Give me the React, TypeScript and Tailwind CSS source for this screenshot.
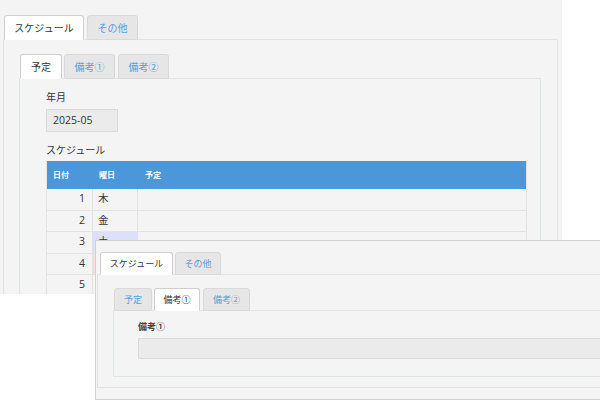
import React from "react";

const font = { fontFamily: '"Open Sans","Noto Sans CJK JP",sans-serif' };

const rows = [
  { d: 1, w: "木", bg: "" },
  { d: 2, w: "金", bg: "" },
  { d: 3, w: "土", bg: "bg-[#dde0fb]" },
  { d: 4, w: "日", bg: "bg-[#f8dcdc]" },
  { d: 5, w: "月", bg: "" },
];

function Window1() {
  return (
    <div className="absolute left-0 top-0 h-[294px] w-[562px] overflow-hidden bg-[#f4f4f4]">
      <div className="pl-[3px] pr-[4px] pt-[15px]">
        <div className="relative z-10 flex gap-[3px] pl-px font-[Noto_Sans_CJK_JP]">
          <div className="flex h-[25px] w-[80px] items-center justify-center rounded-t-[3px] border border-[#cfcfcf] border-b-white bg-white text-[10px] text-[#333]">
            スケジュール
          </div>
          <div className="flex h-[25px] w-[51px] items-center justify-center rounded-t-[3px] border border-[#d9d9d9] bg-[#e6e6e6] text-[10px] text-[#5b9dd9]">
            その他
          </div>
        </div>
        <div className="-mt-px h-[300px] border border-[#e2e2e2] pl-[15px] pr-[16px] pt-[14px]">
          <div className="relative z-10 flex gap-[2px] pl-px font-[Noto_Sans_CJK_JP]">
            <div className="flex h-[25px] w-[42px] items-center justify-center rounded-t-[3px] border border-[#cfcfcf] border-b-white bg-white text-[10px] text-[#333]">
              予定
            </div>
            <div className="flex h-[25px] w-[51px] items-center justify-center rounded-t-[3px] border border-[#d9d9d9] bg-[#e6e6e6] text-[10px] text-[#5b9dd9]">
              備考①
            </div>
            <div className="ml-px flex h-[25px] w-[51px] items-center justify-center rounded-t-[3px] border border-[#d9d9d9] bg-[#e6e6e6] text-[10px] text-[#5b9dd9]">
              備考②
            </div>
          </div>
          <div className="-mt-px h-[300px] border border-[#dfe4e4] pl-[26px] pr-[13px] pt-[11px]">
            <div className="text-[10px] leading-[14px] text-[#333]">年月</div>
            <div className="mt-[5px] flex h-[23px] w-[72px] items-center border border-[#dadada] bg-[#ebebeb] px-[6px] text-[10.5px] text-[#333]">
              2025-05
            </div>
            <div className="mt-[11px] text-[10px] leading-[14px] text-[#333]">スケジュール</div>
            <div className="mt-[4px] border-x border-[#e2e2e2]">
              <div className="flex h-[28px] items-center bg-[#4b97d9] text-[8px] font-bold text-white">
                <div className="w-[46px] pl-[6px]">日付</div>
                <div className="w-[45px] pl-[6px]">曜日</div>
                <div className="flex-1 pl-[7px]">予定</div>
              </div>
              {rows.map((r) => (
                <div key={r.d} className="flex h-[21.5px] border-b border-[#e2e2e2] text-[10.5px] text-[#333]">
                  <div className="flex w-[46px] items-center justify-end border-r border-[#e2e2e2] pr-[7px]">{r.d}</div>
                  <div className={"flex w-[45px] items-center border-r border-[#e2e2e2] pl-[5px] " + r.bg}>{r.w}</div>
                  <div className="flex-1"></div>
                </div>
              ))}
            </div>
          </div>
        </div>
      </div>
    </div>
  );
}

function Window2() {
  return (
    <div className="absolute left-[95px] top-[240px] h-[160px] w-[540px] overflow-hidden border border-[#d3d3d3] bg-[#f4f4f4]">
      <div className="pl-px pt-[11px]">
        <div className="relative z-10 flex gap-[2px] pl-[3px] font-[Noto_Sans_CJK_JP]">
          <div className="flex h-[23px] w-[73px] items-center justify-center rounded-t-[3px] border border-[#cfcfcf] border-b-white bg-white text-[9px] text-[#333]">
            スケジュール
          </div>
          <div className="flex h-[23px] w-[46px] items-center justify-center rounded-t-[3px] border border-[#d9d9d9] bg-[#e6e6e6] text-[9px] text-[#5b9dd9]">
            その他
          </div>
        </div>
        <div className="-mt-px h-[114px] border border-[#e2e2e2] pl-[15px] pt-[13px]">
          <div className="relative z-10 flex gap-[2px] pl-px font-[Noto_Sans_CJK_JP]">
            <div className="flex h-[23px] w-[38px] items-center justify-center rounded-t-[3px] border border-[#d9d9d9] bg-[#e6e6e6] text-[9px] text-[#5b9dd9]">
              予定
            </div>
            <div className="flex h-[23px] w-[46px] items-center justify-center rounded-t-[3px] border border-[#cfcfcf] border-b-white bg-white text-[9px] text-[#333]">
              備考①
            </div>
            <div className="ml-px flex h-[23px] w-[47px] items-center justify-center rounded-t-[3px] border border-[#d9d9d9] bg-[#e6e6e6] text-[9px] text-[#5b9dd9]">
              備考②
            </div>
          </div>
          <div className="-mt-px h-[67px] border border-[#dfe4e4] pl-[24px] pt-[10px]">
            <div className="font-[Noto_Sans_CJK_JP] text-[9px] font-semibold leading-[12px] text-[#444]">備考①</div>
            <div className="mt-[5px] h-[21px] w-[500px] border border-[#dadada] bg-[#ebebeb]"></div>
          </div>
        </div>
      </div>
    </div>
  );
}

export default function App() {
  return (
    <div className="relative h-[400px] w-[600px] overflow-hidden bg-white" style={font}>
      <Window1 />
      <Window2 />
    </div>
  );
}
